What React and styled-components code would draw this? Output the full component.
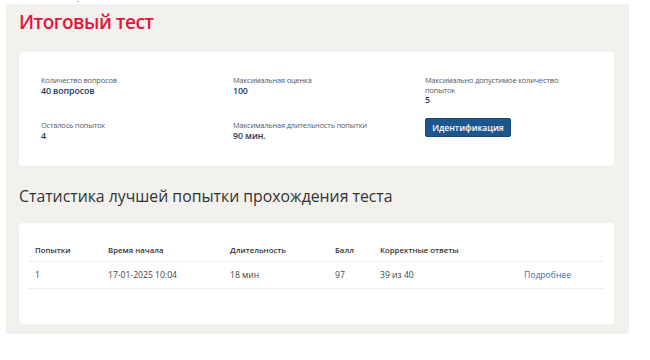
import React from "react";
import styled, { createGlobalStyle } from "styled-components";

const Global = createGlobalStyle`
  html, body { margin: 0; padding: 0; background: #ffffff; }
  body { font-family: "Open Sans", "Noto Sans", sans-serif; }
  * { box-sizing: border-box; }
`;

const Page = styled.div`
  padding: 4px 0 0 6px;
  width: 650px;
  height: 360px;
  position: relative;
`;

const Dot = styled.span`
  position: absolute;
  left: 77px;
  top: 1px;
  width: 2px;
  height: 1px;
  background: #9fb4d4;
`;

const Panel = styled.main`
  width: 623px;
  height: 330px;
  background: #f2f1ee;
  padding: 6px 15px 0 13px;
  display: flex;
  flex-direction: column;
`;

const Title = styled.h1`
  margin: 0 0 18px;
  font-size: 19px;
  line-height: 24px;
  font-weight: 600;
  color: #e4153c;
  letter-spacing: -0.5px;
`;

const Card = styled.section`
  background: #ffffff;
  border-radius: 3px;
  box-shadow: 0 0 1px rgba(0, 0, 0, 0.06);
  padding: ${(p) => p.$pad};
`;

const InfoGrid = styled.div`
  display: grid;
  grid-template-columns: repeat(3, 150px);
  column-gap: 42px;
  row-gap: 15px;
  align-items: start;
`;

const Item = styled.div`
  display: flex;
  flex-direction: column;
`;

const Label = styled.span`
  font-size: 7.4px;
  line-height: 9.5px;
  letter-spacing: -0.15px;
  color: #505866;
`;

const Value = styled.span`
  font-size: 8.8px;
  line-height: 11px;
  font-weight: 600;
  letter-spacing: -0.1px;
  color: #1d3a63;
`;

const Button = styled.button`
  width: 86px;
  height: 19px;
  margin-top: -3px;
  padding: 0;
  border: 1px solid #174775;
  border-radius: 2px;
  background: #1d568c;
  color: #ffffff;
  font-family: inherit;
  font-size: 8.6px;
  font-weight: 600;
  cursor: pointer;
`;

const Subtitle = styled.h2`
  margin: 20px 0 17px;
  font-size: 15.8px;
  line-height: 20px;
  font-weight: 400;
  color: #333333;
`;

const Row = styled.div`
  display: grid;
  grid-template-columns: 73px 122px 105px 45px 144px 1fr;
  height: ${(p) => (p.$head ? "23px" : "27px")};
  align-items: center;
  border-bottom: 1.5px solid #eeeeec;
`;

const Cell = styled.span`
  padding-left: 7px;
  font-size: ${(p) => (p.$head ? "7.8px" : "8.6px")};
  font-weight: ${(p) => (p.$head ? 600 : 400)};
  color: ${(p) => (p.$head ? "#333333" : "#444444")};
`;

const Link = styled.a`
  padding-left: 7px;
  font-size: 8.6px;
  color: #3f6ea6;
  text-decoration: none;
`;

const info = [
  { label: "Количество вопросов", value: "40 вопросов" },
  { label: "Максимальная оценка", value: "100" },
  { label: "Максимально допустимое количество попыток", value: "5" },
  { label: "Осталось попыток", value: "4" },
  { label: "Максимальная длительность попытки", value: "90 мин." },
];

export default function App() {
  return (
    <>
      <Global />
      <Page>
        <Dot />
        <Panel>
          <Title>Итоговый тест</Title>
          <Card $pad="24px 22px 24px 22px">
            <InfoGrid>
              {info.map((i) => (
                <Item key={i.label}>
                  <Label>{i.label}</Label>
                  <Value>{i.value}</Value>
                </Item>
              ))}
              <Item>
                <Button>Идентификация</Button>
              </Item>
            </InfoGrid>
          </Card>
          <Subtitle>Статистика лучшей попытки прохождения теста</Subtitle>
          <Card $pad="16px 10px 35px 9px">
            <Row $head>
              <Cell $head>Попытки</Cell>
              <Cell $head>Время начала</Cell>
              <Cell $head>Длительность</Cell>
              <Cell $head>Балл</Cell>
              <Cell $head>Корректные ответы</Cell>
              <Cell $head></Cell>
            </Row>
            <Row>
              <Cell>1</Cell>
              <Cell>17-01-2025 10:04</Cell>
              <Cell>18 мин</Cell>
              <Cell>97</Cell>
              <Cell>39 из 40</Cell>
              <Link href="#">Подробнее</Link>
            </Row>
          </Card>
        </Panel>
      </Page>
    </>
  );
}
